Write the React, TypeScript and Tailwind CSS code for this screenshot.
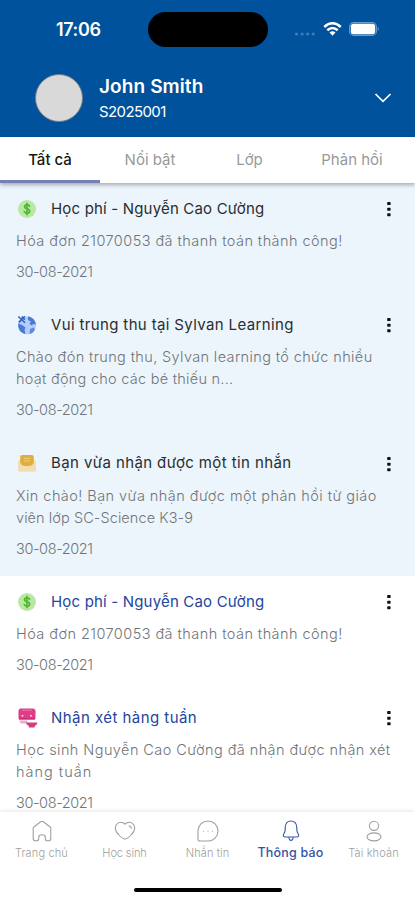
import React, { useState } from "react";

type NoticeIcon = "fee" | "globe" | "mail" | "review";

interface Notice {
  id: number;
  icon: NoticeIcon;
  title: string;
  titleClass: string;
  lines: { text: string; className: string }[];
  date: string;
  unread: boolean;
}

const NOTICES: Notice[] = [
  {
    id: 1,
    icon: "fee",
    title: "Học phí - Nguyễn Cao Cường",
    titleClass: "tracking-[0.18px]",
    lines: [{ text: "Hóa đơn 21070053 đã thanh toán thành công!", className: "tracking-[0.44px]" }],
    date: "30-08-2021",
    unread: true,
  },
  {
    id: 2,
    icon: "globe",
    title: "Vui trung thu tại Sylvan Learning",
    titleClass: "tracking-[0.36px]",
    lines: [
      { text: "Chào đón trung thu, Sylvan learning tổ chức nhiều", className: "tracking-[0.37px]" },
      { text: "hoạt động cho các bé thiếu n...", className: "tracking-[0.26px]" },
    ],
    date: "30-08-2021",
    unread: true,
  },
  {
    id: 3,
    icon: "mail",
    title: "Bạn vừa nhận được một tin nhắn",
    titleClass: "tracking-[0.4px]",
    lines: [
      { text: "Xin chào! Bạn vừa nhận được một phản hồi từ giáo", className: "tracking-[0.44px]" },
      { text: "viên lớp SC-Science K3-9", className: "tracking-[0.08px]" },
    ],
    date: "30-08-2021",
    unread: true,
  },
  {
    id: 4,
    icon: "fee",
    title: "Học phí - Nguyễn Cao Cường",
    titleClass: "tracking-[0.18px]",
    lines: [{ text: "Hóa đơn 21070053 đã thanh toán thành công!", className: "tracking-[0.44px]" }],
    date: "30-08-2021",
    unread: false,
  },
  {
    id: 5,
    icon: "review",
    title: "Nhận xét hàng tuần",
    titleClass: "tracking-[0.45px]",
    lines: [
      { text: "Học sinh Nguyễn Cao Cường đã nhận được nhận xét", className: "tracking-[0.42px]" },
      { text: "hàng tuần", className: "tracking-[1px]" },
    ],
    date: "30-08-2021",
    unread: false,
  },
];

const TABS = [
  { label: "Tất cả", className: "w-[100px]" },
  { label: "Nổi bật", className: "w-[100px]" },
  { label: "Lớp", className: "w-[99px]" },
  { label: "Phản hồi", className: "w-[106px]" },
];

const NoticeGlyph = ({ icon }: { icon: NoticeIcon }) => {
  if (icon === "fee") {
    return (
      <svg className="size-5" viewBox="0 0 20 20" fill="none">
        <circle cx="10" cy="10" r="9" fill="#b9e8a4" />
        <path d="M12.6 7.3C12.2 6.3 11.2 5.9 10 5.9C8.6 5.9 7.5 6.6 7.5 7.8C7.5 10.5 12.7 9.2 12.7 12C12.7 13.3 11.5 14.1 10 14.1C8.6 14.1 7.6 13.5 7.2 12.5M10 4.3V15.7" stroke="#4db52e" strokeWidth="1.6" strokeLinecap="round" />
      </svg>
    );
  }
  if (icon === "globe") {
    return (
      <svg className="size-5" viewBox="0 0 20 20" fill="none">
        <circle cx="10" cy="10.3" r="9" fill="#b3cdf6" />
        <path d="M11 1.4C15.5 2 18.6 5.6 19 9.5L16.5 9L14.5 10.5L12.5 8.5L14 6.5L11 5Z" fill="#4a79d8" />
        <path d="M1.2 8.5L5 10L8.5 12.5L7.5 15L8.5 19C4 18.2 .8 14.5 1.2 8.5Z" fill="#4a79d8" />
        <path d="M13 14L16.5 12.5L18 14.5C16.8 17 15 18.4 12.5 19Z" fill="#5c8ae2" />
        <path d="M1.3 1.5L8 7.7M7.8 1.3L1.8 7.4M4.6 1.5L7.8 4.6" stroke="#2d5dbe" strokeWidth="1.5" />
      </svg>
    );
  }
  if (icon === "mail") {
    return (
      <svg className="size-5" viewBox="0 0 20 20" fill="none">
        <path d="M1 8L3 5H17L19 8V16Q19 17.5 17.5 17.5H2.5Q1 17.5 1 16Z" fill="#f3dfae" />
        <path d="M5 1H15Q16.8 1 16.8 3V9Q15.500 12 12.500 12H7.500Q4.500 12 3.200 9V3Q3.200 1 5 1Z" fill="#dfae3c" />
        <path d="M7 4.500H13M7 7H13" stroke="#f0cd7c" strokeWidth="1.200" />
        <path d="M1 8L3.200 9Q4.500 12 7.500 12H12.500Q15.500 12 16.800 9L19 8V16Q19 17.500 17.500 17.500H2.500Q1 17.500 1 16Z" fill="#f1deb0" />
      </svg>
    );
  }
  return (
    <svg className="size-[22px]" viewBox="0 0 22 22" fill="none">
      <path d="M3.500 1.500H15.500Q18.500 1.500 18.500 4V11Q18.500 12.500 17 12.500H3Q1.500 12.500 1.500 11V4Q1.500 1.500 3.500 1.500Z" fill="#e03c88" />
      <path d="M5 3.200H15" stroke="#ee7fb2" strokeWidth="0.900" />
      <path d="M2 11H18V12.500H2Z" fill="#cf2c76" />
      <circle cx="5.500" cy="8.700" r="1" fill="#fbd5e6" />
      <circle cx="14" cy="8.700" r="1" fill="#fbd5e6" />
      <path d="M2.500 13.500H10.500V16.500H5.500Q2.500 16.500 2.500 13.500Z" fill="#f4a9ca" />
      <path d="M9 15.500H20.500Q20 18 18 18.500L17.500 20.500H12L11.500 18.500Q9.500 18 9 15.500Z" fill="#d83a80" />
    </svg>
  );
};

const KebabIcon = () => (
  <svg className="h-4 w-1" viewBox="0 0 4 16" fill="#111111">
    <rect x="0.2" y="1.1" width="3.4" height="3" rx="0.7" />
    <rect x="0.2" y="6.7" width="3.4" height="3" rx="0.7" />
    <rect x="0.2" y="12.3" width="3.4" height="3" rx="0.7" />
  </svg>
);

const StatusBar = () => (
  <div className="flex h-[58px] items-center pl-[56px] pr-[35px]">
    <span className="w-[92px] pt-[2px] text-[18px] leading-none font-semibold tracking-[-0.4px] text-white">17:06</span>
    <div className="h-[35px] w-[120px] rounded-full bg-black" />
    <div className="ml-auto flex w-[86px] items-center gap-[7px]">
      <svg className="mt-[9px] h-1 w-[22px]" viewBox="0 0 22 4" fill="#3f7dbb">
        <circle cx="2.5" cy="2" r="1.6" />
        <circle cx="8.1" cy="2" r="1.6" />
        <circle cx="13.7" cy="2" r="1.6" />
        <circle cx="19.3" cy="2" r="1.6" />
      </svg>
      <svg className="h-[14px] w-[19px]" viewBox="0 0 19 14" fill="none" stroke="white" strokeWidth="2.5">
        <path d="M1.2 5Q9.5 -2.4 17.8 5" />
        <path d="M4.3 8.3Q9.5 3.8 14.7 8.3" />
        <path d="M9.5 13.7L6.5 10.6Q9.5 8 12.5 10.6Z" fill="white" stroke="none" />
      </svg>
      <svg className="h-[14px] w-[31px]" viewBox="0 0 31 14" fill="none">
        <rect x="0.6" y="0.6" width="26.8" height="12.8" rx="4" stroke="#6b9bcd" strokeWidth="1.1" />
        <rect x="1.8" y="1.8" width="24.4" height="10.4" rx="2.8" fill="white" />
        <path d="M28.700 4.800Q31 7 28.700 9.200Z" fill="#6b9bcd" />
      </svg>
    </div>
  </div>
);

const NAV_ITEMS = [
  {
    label: "Trang chủ",
    labelClass: "text-[11px] font-light tracking-[0.15px]",
    icon: (
      <path d="M2.2 8.5Q2.2 7.4 3.1 6.7L9.7 1.7Q11 .8 12.3 1.7L18.900 6.700Q19.800 7.400 19.800 8.500V18.500Q19.800 20.800 17.500 20.800H16.500Q14.300 20.800 14.300 18.500V17Q14.300 14.800 11 14.800Q7.700 14.800 7.700 17V18.500Q7.700 20.800 5.500 20.800H4.500Q2.200 20.800 2.200 18.500Z" />
    ),
  },
  {
    label: "Học sinh",
    labelClass: "text-[11px] font-light tracking-[-0.1px]",
    icon: (
      <>
        <path d="M11 4.2C8.5 1.3 4.5 1.8 2.5 4.5C.5 7.5 1.5 11.5 4.5 14.5Q8.5 19 11 19Q13.5 19 17.5 14.5C20.5 11.5 21.5 7.5 19.5 4.5C17.5 1.8 13.5 1.3 11 4.2Z" />
        <path d="M14.500 6Q17.200 6 17.400 8.800" />
      </>
    ),
  },
  {
    label: "Nhắn tin",
    labelClass: "text-[11px] font-light tracking-[0.1px]",
    icon: (
      <>
        <path d="M11 1A10 10 0 1 1 11 21H3Q1 21 1 19V11A10 10 0 0 1 11 1Z" />
        <path d="M6.2 11.2H7.2M10.5 11.2H11.5M14.8 11.2H15.8" />
      </>
    ),
  },
  {
    label: "Thông báo",
    labelClass: "text-[12.5px] font-medium tracking-[0.2px]",
    icon: (
      <>
        <path d="M5.2 9.500V7.500Q5.600 1 11 1Q16.400 1 16.800 7.500V9.500Q16.800 11.500 17.900 13.200Q20 16.600 16.800 17H5.200Q2 16.600 4.100 13.200Q5.200 11.500 5.200 9.500Z" />
        <path d="M8.8 17.300Q9.200 20.500 11 20.500Q12.800 20.500 13.200 17.300" />
      </>
    ),
  },
  {
    label: "Tài khoản",
    labelClass: "text-[11px] font-light tracking-[0.15px]",
    icon: (
      <>
        <circle cx="11" cy="5.8" r="4.6" />
        <ellipse cx="11" cy="16.9" rx="7" ry="4" />
      </>
    ),
  },
];

const App: React.FC = () => {
  const [activeTab, setActiveTab] = useState<number>(0);
  const [activeNav, setActiveNav] = useState<number>(3);

  return (
    <div className="flex h-[900px] w-[415px] flex-col overflow-hidden bg-white font-[Inter,'Noto_Sans',sans-serif]">
      <header className="h-[137px] shrink-0 bg-[#00529c]">
        <StatusBar />
        <div className="flex h-[79px] items-center pl-[35px] pr-[23px]">
          <div className="size-12 rounded-full border border-[#777f87] bg-[#d9d9d9]" />
          <div className="ml-4 flex-1 pt-[3px] text-white">
            <div className="text-[19px] leading-[26px] font-semibold tracking-[0.1px]">John Smith</div>
            <div className="text-[15px] leading-6 tracking-[-0.6px]">S2025001</div>
          </div>
          <svg className="h-[10px] w-[18px]" viewBox="0 0 18 10" fill="none" stroke="white" strokeWidth="1.7">
            <path d="M1.5 1L9 8.4L16.5 1" />
          </svg>
        </div>
      </header>

      <nav className="z-10 flex h-[46px] shrink-0 bg-white shadow-[0_2px_4px_rgba(0,0,0,0.3)]">
        {TABS.map((tab, index) => (
          <button
            key={tab.label}
            className={`${tab.className} border-b-[3px] pt-[3px] text-[15px] ${
              activeTab === index ? "border-[#7480b8] font-medium text-[#151515]" : "border-transparent text-[#999999]"
            }`}
            onClick={() => setActiveTab(index)}
          >
            {tab.label}
          </button>
        ))}
      </nav>

      <main className="min-h-0 flex-1 overflow-hidden">
        {NOTICES.map((notice) => (
          <article
            key={notice.id}
            className={`px-4 pt-[14.2px] pb-4 ${notice.unread ? "bg-[#ecf5fc]" : "bg-white"}`}
          >
            <div className="flex h-6 items-center">
              <div className="w-[35px] pl-px">
                <NoticeGlyph icon={notice.icon} />
              </div>
              <h2
                className={`flex-1 text-[15px] whitespace-nowrap ${notice.titleClass} ${
                  notice.unread ? "text-[#2a2d30]" : "text-[#24459b]"
                }`}
              >
                {notice.title}
              </h2>
              <button className="mr-2">
                <KebabIcon />
              </button>
            </div>
            <div className="mt-[9px] text-[14.5px] leading-[22px] font-light text-[#707478]">
              {notice.lines.map((line) => (
                <p key={line.text} className={`whitespace-nowrap ${line.className}`}>
                  {line.text}
                </p>
              ))}
              <p className="mt-[9px] tracking-[-0.4px]">{notice.date}</p>
            </div>
          </article>
        ))}
      </main>

      <footer className="z-10 h-[88px] shrink-0 bg-white shadow-[0_-1px_4px_rgba(0,0,0,0.1)]">
        <div className="grid h-[76px] grid-cols-5">
          {NAV_ITEMS.map((item, index) => (
            <button
              key={item.label}
              className={`flex flex-col items-center pt-2 ${activeNav === index ? "text-[#3554a5]" : "text-[#a0a0a0]"}`}
              onClick={() => setActiveNav(index)}
            >
              <svg className="size-[22px]" viewBox="0 0 22 22" fill="none" stroke="currentColor" strokeWidth="1.1">
                {item.icon}
              </svg>
              <span className={`mt-[2px] leading-[18px] whitespace-nowrap ${item.labelClass}`}>{item.label}</span>
            </button>
          ))}
        </div>
        <div className="mx-auto h-1 w-[148px] rounded-full bg-black" />
      </footer>
    </div>
  );
};

export default App;
